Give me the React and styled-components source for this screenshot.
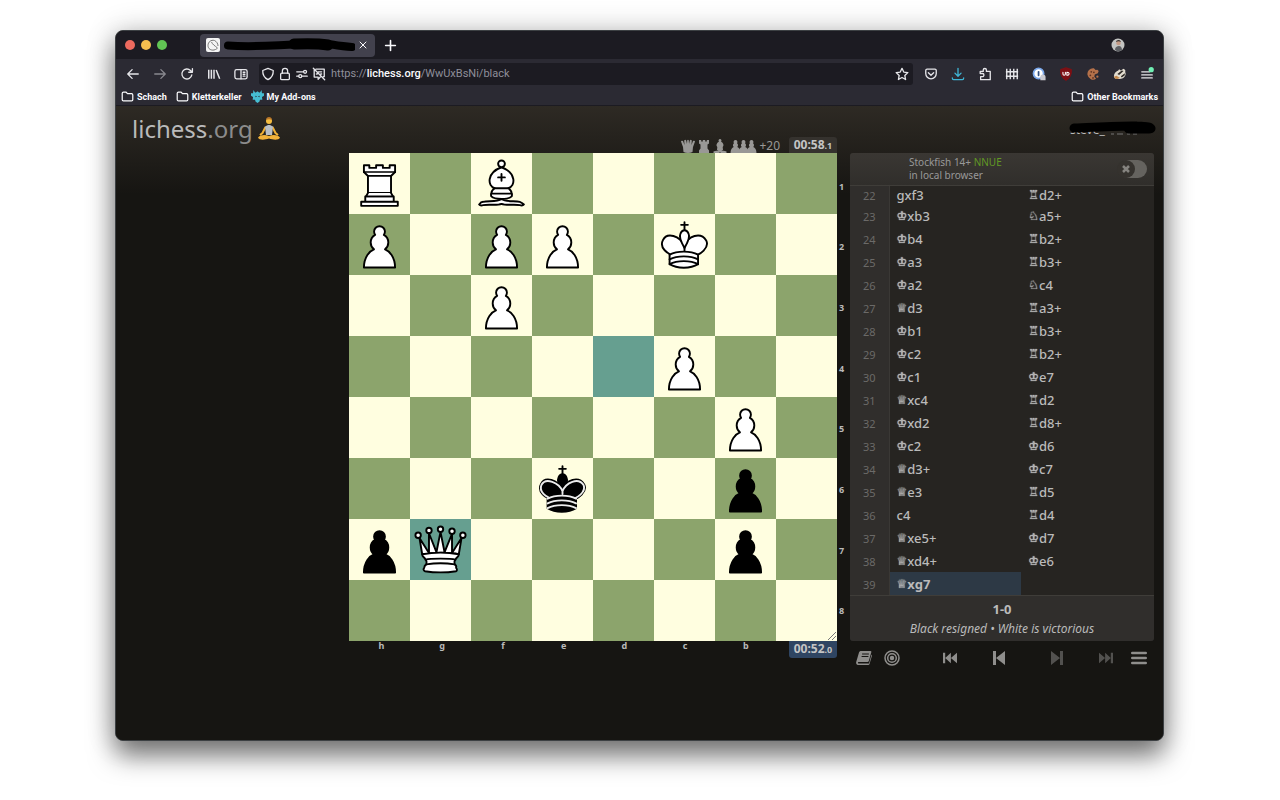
import React from 'react';
import styled, { createGlobalStyle } from 'styled-components';

const Global = createGlobalStyle`
  body {
    margin: 0;
    background: #fff;
    font-family: 'Noto Sans', sans-serif;
  }
  * {
    box-sizing: border-box;
  }
  button {
    border: 0;
    padding: 0;
    background: none;
    color: inherit;
    font: inherit;
    cursor: pointer;
  }
  a {
    color: inherit;
    text-decoration: none;
  }
  svg {
    display: block;
    flex: none;
  }
`;

const Desktop = styled.div`
  display: flex;
  min-height: 100vh;
  padding: 30px 116px 59px 115px;
`;

const BrowserWindow = styled.div`
  flex: 1;
  display: flex;
  flex-direction: column;
  min-width: 0;
  overflow: hidden;
  border: 1px solid #3c4043;
  border-radius: 8px;
  background: #161512;
  box-shadow: 0 15px 26px rgba(0, 0, 0, 0.5), 0 0 30px rgba(0, 0, 0, 0.2);
`;

const TabBar = styled.div`
  display: flex;
  align-items: center;
  height: 28px;
  padding: 0 38px 0 9px;
  background: #1c1b22;
  color: #fbfbfe;
`;

const Lights = styled.div`
  display: flex;
  gap: 6px;
  width: 75px;
`;

const Light = styled.button`
  width: 10px;
  height: 10px;
  border-radius: 50%;
  background: ${(p) => p.$color};
`;

const Tab = styled.div`
  display: flex;
  align-items: center;
  gap: 4px;
  width: 175px;
  height: 23px;
  padding: 0 6px;
  border-radius: 4px;
  background: #42414d;
`;

const NewTab = styled.button`
  margin: 0 auto 0 9px;
`;

const NavBar = styled.div`
  display: flex;
  align-items: center;
  gap: 11px;
  height: 29px;
  padding: 0 9px 0 10px;
  background: #2b2a33;
  color: #e6e6ea;
`;

const NavGroup = styled.div`
  display: flex;
  align-items: center;
  gap: 13px;
`;

const IconButton = styled.button`
  display: flex;
  opacity: ${(p) => (p.$dim ? 0.5 : 1)};
`;

const AddressBar = styled.div`
  flex: 1;
  display: flex;
  align-items: center;
  gap: 3px;
  height: 22px;
  padding: 0 4px 0 2px;
  border-radius: 3px;
  background: #1c1b22;
`;

const Address = styled.a`
  flex: 1;
  padding-left: 2px;
  color: #8f8f9a;
  font: 11px Roboto, sans-serif;

  b {
    color: #fbfbfe;
    font-weight: 500;
  }
`;

const Bookmarks = styled.nav`
  display: flex;
  align-items: center;
  gap: 9px;
  height: 18px;
  padding: 0 5px;
  border-bottom: 1px solid #1c1b22;
  background: #2b2a33;
  color: #fbfbfe;
  font: 700 9px Roboto, sans-serif;
`;

const Bookmark = styled.a`
  display: flex;
  align-items: center;
  gap: 3px;
  margin-left: ${(p) => (p.$right ? 'auto' : '0')};
`;

const Site = styled.div`
  flex: 1;
  background: linear-gradient(#2e2a24, #161512 88px);
  color: #bababa;
`;

const SiteHeader = styled.header`
  display: flex;
  align-items: center;
  justify-content: space-between;
  height: 32px;
  padding: 13px 6px 0 16px;
`;

const Logo = styled.a`
  display: flex;
  align-items: center;
  gap: 4px;
  font-size: 24px;
  line-height: 20px;

  span {
    color: #8c8c8c;
  }
`;

const User = styled.a`
  position: relative;
  width: 88px;
  padding: 2px 0 0 1px;
  font-size: 12px;
  line-height: 18px;

  svg {
    position: absolute;
    top: 2px;
    left: 0;
  }
`;

const Game = styled.main`
  display: grid;
  grid-template-columns: 233fr 488fr 13px 304fr;
  grid-template-rows: 15px auto auto;
  padding-right: 9px;
`;

const Material = styled.div`
  grid-column: 2;
  display: flex;
  align-items: flex-end;
  justify-content: flex-end;
  color: #999896;
  font-size: 12px;
  line-height: 15px;

  svg + svg {
    margin-left: 3px;
  }
`;

const Score = styled.span`
  margin: 0 9px 0 2px;
`;

const Clock = styled.div`
  width: 48px;
  padding: ${(p) => (p.$running ? '0 0 1px' : '0')};
  border-radius: ${(p) => (p.$running ? '0 0 3px 3px' : '3px 3px 0 0')};
  background: ${(p) => (p.$running ? '#2f4562' : '#35322e')};
  color: #c4c4c4;
  font-size: 12px;
  font-weight: 700;
  line-height: 15px;
  text-align: center;

  small {
    font-size: 9px;
  }
`;

const Board = styled.div`
  grid-column: 2;
  display: grid;
  grid-template-columns: repeat(8, 1fr);
  aspect-ratio: 1;
  position: relative;
`;

const Square = styled.div`
  aspect-ratio: 1;
  background: ${(p) => {
    if (p.$lastMove) return '#669f90';
    return p.$dark ? '#8ca46c' : '#fffee0';
  }};

  svg {
    width: 100%;
    height: 100%;
  }
`;

const ResizeHandle = styled.svg`
  position: absolute;
  right: 1px;
  bottom: 1px;
`;

const Ranks = styled.div`
  display: grid;
  grid-template-rows: repeat(8, 1fr);
  align-items: center;
  padding: 3px 0 0 2px;
  font-size: 9px;
  font-weight: 700;
`;

const BoardFooter = styled.div`
  grid-column: 2;
  display: flex;
  align-items: flex-start;
`;

const Files = styled.div`
  flex: 1;
  display: grid;
  grid-template-columns: repeat(8, 1fr);
  margin-right: -48px;
  padding-left: 2px;
  font-size: 9px;
  font-weight: 700;
  line-height: 10px;
  text-align: center;
`;

const Tools = styled.section`
  display: flex;
  flex-direction: column;
  min-height: 0;
  overflow: hidden;
  border-radius: 3px;
  background: #262421;
`;

const Engine = styled.div`
  display: flex;
  align-items: center;
  justify-content: space-between;
  flex: none;
  height: 33px;
  padding: 0 7px 0 59px;
  border-bottom: 1px solid #3f3d39;
  background: linear-gradient(#3a3733, #302e2b);
  color: #999;
  font-size: 10px;
  line-height: 13px;

  em {
    color: #629924;
    font-style: normal;
  }
`;

const Toggle = styled.label`
  display: flex;
  align-items: center;
  position: relative;

  input {
    position: absolute;
    inset: 0;
    margin: 0;
    opacity: 0;
  }
`;

const MoveList = styled.div`
  flex: 1 1 0;
  display: flex;
  flex-direction: column;
  justify-content: flex-end;
  min-height: 0;
  overflow: hidden;
`;

const MoveTable = styled.table`
  width: 100%;
  border-collapse: collapse;
  table-layout: fixed;
  font-size: 13px;
  font-weight: 500;
  line-height: 17px;
`;

const MoveNumber = styled.th`
  width: 39px;
  padding: 1px 0 0;
  border-right: 1px solid #3a3835;
  background: #302e2c;
  color: #6b6a68;
  font-size: 11px;
  font-weight: 400;
  text-align: center;
`;

const MoveCell = styled.td`
  height: 23px;
  padding: 1px 7px 0;
  background: ${(p) => (p.$active ? '#2d3945' : 'none')};
  font-weight: ${(p) => (p.$active ? 700 : 500)};

  tr:first-child & {
    height: 18px;
  }

  button {
    display: flex;
    align-items: center;
    height: 17px;
  }
`;

const Figurine = styled.span`
  font-family: 'DejaVu Sans', sans-serif;
  font-size: 12px;
  font-weight: 700;
  text-shadow: 0 0 1px currentColor, 0 0 1px currentColor;
`;

const Result = styled.div`
  flex: none;
  height: 46px;
  padding-top: 4px;
  border-top: 1px solid #3f3d39;
  background: #302e2c;
  font-size: 12px;
  line-height: 19px;
  text-align: center;

  strong {
    display: block;
    font-size: 13px;
  }
`;

const Controls = styled.div`
  grid-column: 4;
  display: flex;
  align-items: center;
  justify-content: space-between;
  height: 34px;
  padding: 0 7px 0 6px;
  color: #8f8e8c;
`;

const ControlGroup = styled.div`
  display: flex;
  align-items: center;
  gap: ${(p) => p.$gap};
`;

const PAWN =
  'M22.5 9c-2.21 0-4 1.79-4 4 0 .89.29 1.71.78 2.38C17.33 16.5 16 18.59 16 21c0 2.03.94 3.84 2.41 5.03-3 1.06-7.41 5.55-7.41 13.47h23c0-7.92-4.41-12.41-7.41-13.47 1.47-1.19 2.41-3 2.41-5.03 0-2.41-1.33-4.5-3.28-5.62.49-.67.78-1.49.78-2.38 0-2.21-1.79-4-4-4z';
const KING_CORE =
  'M22.5 25s4.5-7.5 3-10.5c0 0-1-2.5-3-2.5s-3 2.5-3 2.5c-1.5 3 3 10.5 3 10.5';
const KING_BODY =
  'M11.5 37c5.5 3.5 15.5 3.5 21 0v-7s9-4.5 6-10.5c-4-6.5-13.5-3.5-16 4V27v-3.5c-3.5-7.5-13-10.5-16-4-3 6 5 10 5 10V37z';
const KING_BANDS =
  'M11.5 30c5.5-3 15.5-3 21 0m-21 3.5c5.5-3 15.5-3 21 0m-21 3.5c5.5-3 15.5-3 21 0';

const SHAPES = {
  P: <path d={PAWN} />,
  p: <path d={PAWN} fill="#000" />,
  R: (
    <>
      <path d="M9 39h27v-3H9v3zM12 36v-4h21v4H12zM11 14V9h4v2h5V9h5v2h5V9h4v5" />
      <path d="M34 14l-3 3H14l-3-3" />
      <path d="M31 17v12.5H14V17" />
      <path d="M31 29.5l1.5 2.5h-20l1.5-2.5" />
      <path d="M11 14h23M14 17h17" fill="none" strokeWidth="1" />
    </>
  ),
  B: (
    <>
      <path d="M9 36c3.39-.97 10.11.43 13.5-2 3.39 2.43 10.11 1.03 13.5 2 0 0 1.65.54 3 2-.68.97-1.65.99-3 .5-3.39-.97-10.11.46-13.5-1-3.39 1.46-10.11.03-13.5 1-1.354.49-2.323.47-3-.5 1.354-1.94 3-2 3-2z" />
      <path d="M15 32c2.5 2.5 12.5 2.5 15 0 .5-1.5 0-2 0-2 0-2.5-2.5-4-2.5-4 5.5-1.5 6-11.5-5-15.5-11 4-10.5 14-5 15.5 0 0-2.5 1.5-2.5 4 0 0-.5.5 0 2z" />
      <path d="M25 8a2.5 2.5 0 1 1-5 0 2.5 2.5 0 1 1 5 0z" />
      <path d="M17.5 26h10M15 30h15m-7.5-14.5v5M20 18h5" fill="none" />
    </>
  ),
  K: (
    <>
      <path d="M22.5 11.63V6M20 8h5" />
      <path d={KING_BODY} />
      <path d={KING_CORE} />
      <path d={KING_BANDS} fill="none" />
    </>
  ),
  k: (
    <>
      <path d="M22.5 11.63V6M20 8h5" />
      <path d={KING_CORE} fill="#000" />
      <path d={KING_BODY} fill="#000" />
      <g fill="none" stroke="#ececec">
        <path d="M32 29.5s8.5-4 6.03-9.65C34.15 14 25 18 22.5 24.5v2.1-2.1C20 18 9.906 14 6.997 19.85c-2.497 5.65 4.853 9 4.853 9" />
        <path d={KING_BANDS} />
      </g>
    </>
  ),
  Q: (
    <>
      <path d="M8 12a2 2 0 1 1-4 0 2 2 0 1 1 4 0zM24.5 7.5a2 2 0 1 1-4 0 2 2 0 1 1 4 0zM41 12a2 2 0 1 1-4 0 2 2 0 1 1 4 0zM16 8.5a2 2 0 1 1-4 0 2 2 0 1 1 4 0zM33 9a2 2 0 1 1-4 0 2 2 0 1 1 4 0z" />
      <path d="M9 26c8.5-1.5 21-1.5 27 0l2-12-7 11V11l-5.5 13.5-3-15-3 15-5.5-14V25L7 14l2 12z" />
      <path d="M9 26c0 2 1.5 2 2.5 4 1 1.5 1 1 .5 3.5-1.5 1-1.5 2.5-1.5 2.5-1.5 1.5.5 2.5.5 2.5 6.5 1 16.5 1 23 0 0 0 1.5-1 0-2.5 0 0 .5-1.5-1-2.5-.5-2.5-.5-2 .5-3.5 1-2 2.5-2 2.5-4-8.5-1.5-18.5-1.5-27 0z" />
      <path d="M11.5 30c3.5-1 18.5-1 22 0M12 33.5c6-1 15-1 21 0" fill="none" />
    </>
  ),
};

const Piece = ({ type }) => (
  <svg
    viewBox="0 0 45 45"
    fill="#fff"
    stroke="#000"
    strokeWidth="1.4"
    strokeLinecap="round"
    strokeLinejoin="round"
  >
    {SHAPES[type]}
  </svg>
);

// Seen from black's side, first rank on top
const POSITION = [
  'R.B.....',
  'P.PP.K..',
  '..P.....',
  '.....P..',
  '......P.',
  '...k..p.',
  'pQ....p.',
  '........',
];
const LAST_MOVE = ['3-4', '6-1'];

const MOVES = [
  ['gxf3', '♖d2+'],
  ['♔xb3', '♘a5+'],
  ['♔b4', '♖b2+'],
  ['♔a3', '♖b3+'],
  ['♔a2', '♘c4'],
  ['♕d3', '♖a3+'],
  ['♔b1', '♖b3+'],
  ['♔c2', '♖b2+'],
  ['♔c1', '♔e7'],
  ['♕xc4', '♖d2'],
  ['♔xd2', '♖d8+'],
  ['♔c2', '♔d6'],
  ['♕d3+', '♔c7'],
  ['♕e3', '♖d5'],
  ['c4', '♖d4'],
  ['♕xe5+', '♔d7'],
  ['♕xd4+', '♔e6'],
  ['♕xg7', ''],
];
const FIRST_MOVE = 22;

const Icon = ({ size = 14, children, ...rest }) => (
  <svg
    width={size}
    height={size}
    viewBox="0 0 16 16"
    fill="none"
    stroke="currentColor"
    strokeWidth="1.5"
    strokeLinecap="round"
    strokeLinejoin="round"
    {...rest}
  >
    {children}
  </svg>
);

const FolderIcon = () => (
  <Icon size={13}>
    <path d="M1.5 12V4c0-1 .6-1.5 1.5-1.5h3l2 2h5c1 0 1.5.6 1.5 1.5v6c0 1-.5 1.5-1.5 1.5H3c-1 0-1.5-.5-1.5-1.5z" />
  </Icon>
);

const Move = ({ san, active }) => {
  const isPiece = /^[♔♕♖♗♘]/.test(san);
  return (
    <MoveCell $active={active}>
      {san && (
        <button type="button">
          {isPiece && <Figurine>{san[0]}</Figurine>}
          {isPiece ? san.slice(1) : san}
        </button>
      )}
    </MoveCell>
  );
};

const BrowserChrome = () => (
  <>
    <TabBar>
      <Lights>
        <Light $color="#ed6a5e" aria-label="Close" />
        <Light $color="#f5bf4f" aria-label="Minimise" />
        <Light $color="#61c554" aria-label="Zoom" />
      </Lights>
      <Tab>
        <svg width="14" height="14" viewBox="0 0 14 14">
          <rect width="14" height="14" rx="2" fill="#f4f4f4" />
          <path
            d="M8.5 2.5C5 1.5 2 4 2 7.5S5 12.5 8 12c2-.3 3.5-2 3.5-2M5.5 4c1 2.5 3 3.5 6 6M8.5 2.5c2 1 3.5 3 3.5 5.5"
            fill="none"
            stroke="#777"
          />
        </svg>
        <svg width="131" height="14" viewBox="0 0 131 14">
          <path
            d="M4 7.5C25 9 40 8 60 7s36-2.5 48-.5 12 2 20 2.5"
            fill="none"
            stroke="#000"
            strokeWidth="8"
            strokeLinecap="round"
          />
          <path d="M70 6c12-.5 22-1 34 1" fill="none" stroke="#000" strokeWidth="11" strokeLinecap="round" />
        </svg>
        <IconButton aria-label="Close tab">
          <Icon size={8}>
            <path d="M2 2l12 12M14 2L2 14" strokeWidth="2" />
          </Icon>
        </IconButton>
      </Tab>
      <NewTab aria-label="New tab">
        <Icon size={13}>
          <path d="M8 2v12M2 8h12" strokeWidth="2" />
        </Icon>
      </NewTab>
      <svg width="14" height="14" viewBox="0 0 14 14">
        <circle cx="7" cy="7" r="6.5" fill="#c3c4c2" />
        <path d="M4 12c0-3 2-4 4-4s3 2 3 4a6 6 0 0 1-7 0z" fill="#5d5f63" />
        <circle cx="7.5" cy="5" r="2.3" fill="#c49b86" />
        <path d="M5 4c0-2 4-3 5 0-2-1-3-1-5 0z" fill="#3b3431" />
      </svg>
    </TabBar>
    <NavBar>
      <NavGroup>
        <IconButton aria-label="Back">
          <Icon>
            <path d="M14 8H2.5M7 3L2 8l5 5" />
          </Icon>
        </IconButton>
        <IconButton $dim aria-label="Forward">
          <Icon>
            <path d="M2 8h11.5M9 3l5 5-5 5" />
          </Icon>
        </IconButton>
        <IconButton aria-label="Reload">
          <Icon>
            <path d="M13.5 9A5.7 5.7 0 1 1 12 4l2 2M14.2 1.8V6H10" />
          </Icon>
        </IconButton>
        <IconButton aria-label="Library">
          <Icon>
            <path
              d="M2 3v10.5M5 3v10.5M8 3v10.5M10.5 3.5l4 10"
              strokeLinecap="butt"
              strokeWidth="1.7"
            />
          </Icon>
        </IconButton>
        <IconButton aria-label="Sidebar">
          <Icon>
            <rect x="1" y="3" width="14" height="10.5" rx="2" />
            <path d="M8 3v10.5M10.5 6h2M10.5 8.3h2M10.5 10.5h2" />
          </Icon>
        </IconButton>
      </NavGroup>
      <AddressBar>
        <Icon>
          <path d="M8 1.5l6 2.5C14.2 9 12 12.5 8 14.5 4 12.5 1.8 9 2 4z" />
        </Icon>
        <Icon>
          <rect x="3" y="7" width="10" height="7.5" rx="1.5" />
          <path d="M5 7V4.5a3 3 0 0 1 6 0V7" />
        </Icon>
        <Icon>
          <path d="M2 5.5h7M2 10.5h2M8 10.5h6" />
          <circle cx="11.5" cy="5.5" r="1.7" />
          <circle cx="6" cy="10.5" r="1.7" />
        </Icon>
        <Icon>
          <path d="M4.5 2.5H14V11h-1M9.5 11.5L7 14v-2.5H2.5v-8M1.5 1.5l13 13M7 5.5h4M10 8h1M5 8h1" />
        </Icon>
        <Address href="#black">
          https://<b>lichess.org</b>/WwUxBsNi/black
        </Address>
        <IconButton aria-label="Bookmark this page">
          <Icon>
            <path d="M8 1.5l2 4.3 4.7.6-3.5 3.2.9 4.7L8 12l-4.1 2.3.9-4.7L1.3 6.4 6 5.8z" />
          </Icon>
        </IconButton>
      </AddressBar>
      <NavGroup>
        <IconButton aria-label="Pocket">
          <Icon>
            <path d="M3.5 2.5h9c1 0 1.5.5 1.5 1.5v3.5a6 6 0 0 1-12 0V4c0-1 .5-1.5 1.5-1.5zM5 6.5l3 3 3-3" />
          </Icon>
        </IconButton>
        <IconButton aria-label="Downloads">
          <Icon stroke="#3fb4d4">
            <path d="M8 1.5v9M4.5 7L8 10.5 11.5 7M1.5 12.5c0 1.5.5 2 1.5 2h10c1 0 1.5-.5 1.5-2" />
          </Icon>
        </IconButton>
        <IconButton aria-label="Extensions">
          <Icon>
            <path d="M6 5V3.5a1.8 1.8 0 0 1 3.6 0V5H14v9.5H3V11h2a1.8 1.8 0 0 0 0-3.6H2.5V5z" />
          </Icon>
        </IconButton>
        <IconButton aria-label="Fence">
          <Icon>
            <path
              d="M2 2v12M6 2v12M10 2v12M14 2v12M1 5.5h14M1 10.5h14"
              strokeLinecap="butt"
              strokeWidth="1.6"
            />
          </Icon>
        </IconButton>
        <IconButton aria-label="Password manager">
          <Icon>
            <circle cx="7.5" cy="7.5" r="5.8" fill="#fff" stroke="#7aa7ea" strokeWidth="2" />
            <path d="M7.5 5.5v4" stroke="#314f80" strokeWidth="2" />
            <path d="M9.5 15v-3.5a3 3 0 0 1 6 0V15z" fill="#c9c9d0" stroke="none" />
          </Icon>
        </IconButton>
        <IconButton aria-label="Content blocker">
          <Icon>
            <path d="M8 1l6 2c.5 6-1.5 9.5-6 12C3.5 12.5 1.5 9 2 3z" fill="#7d1014" stroke="#7d1014" />
            <path
              d="M4.5 6v2a1.4 1.4 0 0 0 2.8 0V6M9 6v3.4c3.4.2 3.4-3.6 0-3.4z"
              stroke="#fff"
              strokeWidth="1.2"
            />
          </Icon>
        </IconButton>
        <IconButton aria-label="Cookie manager">
          <Icon stroke="none">
            <path d="M9 1.5a6.5 6.5 0 1 0 2.5 12L9.5 11l.5-2.5L13.5 7l1-2.5L13 3l-2 .5z" fill="#b5714a" />
            <circle cx="6" cy="5.5" r="1" fill="#5f3423" />
            <circle cx="5" cy="9.5" r="1" fill="#5f3423" />
            <circle cx="9" cy="6" r="1" fill="#5f3423" />
            <circle cx="8" cy="12.5" r="1" fill="#5f3423" />
            <circle cx="13" cy="11" r="1.3" fill="#b5714a" />
          </Icon>
        </IconButton>
        <IconButton aria-label="Privacy badger">
          <Icon stroke="none">
            <path d="M1 11c0-3.5 2-6 5-7l1-1.5L9 4l3-2 2 1.5V6c1.5 3-1 7-5 7.5-3 .5-7 .5-8-2.5z" fill="#e2dccf" />
            <path d="M5 8l5-4 2 .5L7 9zM9 10.5L13.5 7v2.5L10 12z" fill="#2e2925" />
            <path d="M1 11l3-1 4 2.5-3 1.3c-2 0-3.5-1-4-2.8z" fill="#c58a4e" />
          </Icon>
        </IconButton>
        <IconButton aria-label="Application menu">
          <Icon>
            <path d="M2 5.5h9M2 9h12M2 12.5h12" />
            <circle cx="12.8" cy="3" r="3" fill="#70f0b4" stroke="none" />
          </Icon>
        </IconButton>
      </NavGroup>
    </NavBar>
    <Bookmarks>
      <Bookmark href="#schach">
        <FolderIcon />
        Schach
      </Bookmark>
      <Bookmark href="#kletterkeller">
        <FolderIcon />
        Kletterkeller
      </Bookmark>
      <Bookmark href="#addons">
        <Icon size={13} stroke="none" fill="#46bdd2">
          <path d="M3 0l2 3h1l2-1.500L10 3h1l2-3 .5 4H16v3l-2.500 1.500.5 3.500h-3l-.5 2L8 16l-2.500-2-.5-2H2l.5-3.500L0 7V4h2.500z" />
          <path d="M5.500 7l2 1-2 1zM10.500 7l-2 1 2 1z" fill="#2b2a33" />
        </Icon>
        My Add-ons
      </Bookmark>
      <Bookmark href="#other" $right>
        <FolderIcon />
        Other Bookmarks
      </Bookmark>
    </Bookmarks>
  </>
);

const CapturedPieces = () => (
  <>
    <svg width="14" height="14" viewBox="0 0 14 14" fill="currentColor">
      <path d="M0 2.5A1.2 1.2 0 0 1 2 2l1.500 4L3.200 1.500a1.200 1.200 0 0 1 2 0L6 5l.2-3.800a1 1 0 0 1 1.600 0L8 5l.8-3.500a1.200 1.200 0 0 1 2 0l-.3 4.500L12 2a1.200 1.200 0 0 1 2 .5L12 8l-.5 5c-2.500 1.300-6.500 1.300-9 0L2 8z" />
    </svg>
    <svg width="12" height="14" viewBox="0 0 12 14" fill="currentColor">
      <path d="M1 1h2.200v1.500h1.600V1h2.400v1.500h1.600V1H11v3.500l-1.500 1v4l1.500 2V14H1v-2.500l1.500-2v-4L1 4.500z" />
    </svg>
    <svg width="14" height="14" viewBox="0 0 14 14" fill="currentColor">
      <path d="M7 0a1.500 1.500 0 0 1 1 2.600c2.500 1.400 3.300 4 1.700 5.400L10 11H8.500c.5 1 3 .5 5 1.500V14H8l-1-.7-1 .7H.5v-1.500c2-1 4.500-.5 5-1.500H4l.3-3C2.700 6.600 3.500 4 6 2.600A1.500 1.500 0 0 1 7 0z" />
    </svg>
    <svg width="27" height="14" viewBox="0 0 27 14" fill="currentColor">
      {[0, 8, 16].map((x) => (
        <path
          key={x}
          transform={`translate(${x} 0)`}
          d="M5.500 1a2 2 0 0 1 1.500 3.300c1.300 1 1.300 2.700.3 3.700 1.700 1 3.200 2.500 3.200 6H.5c0-3.500 1.500-5 3.200-6-1-1-1-2.700.3-3.700A2 2 0 0 1 5.500 1z"
        />
      ))}
    </svg>
  </>
);

const App = () => (
  <Desktop>
    <Global />
    <BrowserWindow>
      <BrowserChrome />
      <Site>
        <SiteHeader>
          <Logo href="#home">
            <div>
              lichess<span>.org</span>
            </div>
            <svg width="24" height="24" viewBox="0 0 24 24">
              <circle cx="12" cy="4" r="3" fill="#f6bd3f" />
              <path d="M9 3c0-4 6-4 6 0-2-1-4-1-6 0z" fill="#b9772a" />
              <path d="M8.5 10l-3 6L3 18M15.5 10l3 6 2.5 2" stroke="#f0b137" strokeWidth="2" fill="none" />
              <path d="M8 9.5L11 8h2l3 1.500-1 8.500H9z" fill="#b9bfc6" />
              <path d="M1 20.5c3-3 7-3 11-1.500 4-1.500 8-1.500 11 1.500-1 3-7 2.500-11 1-4 1.500-10 2-11-1z" fill="#f2b23a" />
            </svg>
          </Logo>
          <User href="#profile">
            steve_
            <svg width="88" height="16" viewBox="0 0 88 16">
              <path d="M42 13h3M48 13h6M58 13h3M64 13h4" stroke="#777" />
              <path
                d="M5 7C30 6 55 4.500 68 5c6 0 10 .5 14 2.500"
                fill="none"
                stroke="#000"
                strokeWidth="9"
                strokeLinecap="round"
              />
              <path d="M60 7h20" stroke="#000" strokeWidth="11" strokeLinecap="round" />
            </svg>
          </User>
        </SiteHeader>
        <Game>
          <Material>
            <CapturedPieces />
            <Score>+20</Score>
            <Clock>
              00:58<small>.1</small>
            </Clock>
          </Material>
          <Board>
            {POSITION.map((row, r) =>
              row.split('').map((type, c) => (
                <Square
                  key={`${r}-${c}`}
                  $dark={(r + c) % 2 === 1}
                  $lastMove={LAST_MOVE.includes(`${r}-${c}`)}
                >
                  {type !== '.' && <Piece type={type} />}
                </Square>
              ))
            )}
            <ResizeHandle width="8" height="8" viewBox="0 0 8 8" stroke="#777">
              <path d="M0 8l8-8M4 8l4-4" />
            </ResizeHandle>
          </Board>
          <Ranks>
            {[1, 2, 3, 4, 5, 6, 7, 8].map((rank) => (
              <span key={rank}>{rank}</span>
            ))}
          </Ranks>
          <Tools>
            <Engine>
              <div>
                Stockfish 14+ <em>NNUE</em>
                <br />
                in local browser
              </div>
              <Toggle>
                <input type="checkbox" aria-label="Toggle local evaluation" />
                <svg width="30" height="18" viewBox="0 0 30 18">
                  <rect x="2" width="28" height="18" rx="9" fill="#65635f" />
                  <circle cx="9" cy="9" r="9" fill="#35322e" />
                  <path d="M6 6l6 6M12 6l-6 6" stroke="#85837f" strokeWidth="2.5" />
                </svg>
              </Toggle>
            </Engine>
            <MoveList>
              <MoveTable>
                <tbody>
                  {MOVES.map(([white, black], i) => (
                    <tr key={i}>
                      <MoveNumber scope="row">{FIRST_MOVE + i}</MoveNumber>
                      <Move san={white} active={i === MOVES.length - 1} />
                      <Move san={black} />
                    </tr>
                  ))}
                </tbody>
              </MoveTable>
            </MoveList>
            <Result>
              <strong>1-0</strong>
              <i>Black resigned • White is victorious</i>
            </Result>
          </Tools>
          <BoardFooter>
            <Files>
              {['h', 'g', 'f', 'e', 'd', 'c', 'b'].map((file) => (
                <span key={file}>{file}</span>
              ))}
            </Files>
            <Clock $running>
              00:52<small>.0</small>
            </Clock>
          </BoardFooter>
          <Controls>
            <ControlGroup $gap="12px">
              <IconButton aria-label="Opening explorer">
                <Icon size={16} stroke="none" fill="currentColor">
                  <path d="M5 1h9.5c.8 0 1 .5.8 1.2L12.8 11c-.2.7-.6 1-1.3 1h-9c-.8 0-.8 1.500 0 1.500H13l2.500-9 .5 1-2.500 8.500c-.2.7-.6 1-1.300 1H2c-1.500 0-2.200-1.500-1.800-3L3 2.500C3.400 1.500 4 1 5 1z" />
                  <path d="M6.5 4h6M6 6.500h6" stroke="#161512" strokeWidth="1" />
                </Icon>
              </IconButton>
              <IconButton aria-label="Practice">
                <Icon size={16}>
                  <circle cx="8" cy="8" r="7" />
                  <circle cx="8" cy="8" r="4.3" />
                  <circle cx="8" cy="8" r="1.5" fill="currentColor" />
                </Icon>
              </IconButton>
            </ControlGroup>
            <ControlGroup $gap="34px">
              <IconButton aria-label="First move">
                <Icon stroke="none" fill="currentColor">
                  <path d="M0 2h2.500v12H0zM9 2v12L2.500 8zM16 2v12L9 8z" />
                </Icon>
              </IconButton>
              <IconButton aria-label="Previous move">
                <Icon size={16} stroke="none" fill="currentColor">
                  <path d="M2 1h3v14H2zM14 1v14L5 8z" />
                </Icon>
              </IconButton>
            </ControlGroup>
            <ControlGroup $gap="18px">
              <ControlGroup $gap="34px">
                <IconButton $dim aria-label="Next move">
                  <Icon size={16} stroke="none" fill="currentColor">
                    <path d="M11 1h3v14h-3zM2 1v14l9-7z" />
                  </Icon>
                </IconButton>
                <IconButton $dim aria-label="Last move">
                  <Icon stroke="none" fill="currentColor">
                    <path d="M13.5 2H16v12h-2.500zM7 2v12l6.500-6zM0 2v12l7-6z" />
                  </Icon>
                </IconButton>
              </ControlGroup>
              <IconButton aria-label="Menu">
                <Icon size={16}>
                  <path d="M1.2 3h13.6M1.2 8h13.6M1.2 13h13.6" strokeWidth="2.4" />
                </Icon>
              </IconButton>
            </ControlGroup>
          </Controls>
        </Game>
      </Site>
    </BrowserWindow>
  </Desktop>
);

export default App;
